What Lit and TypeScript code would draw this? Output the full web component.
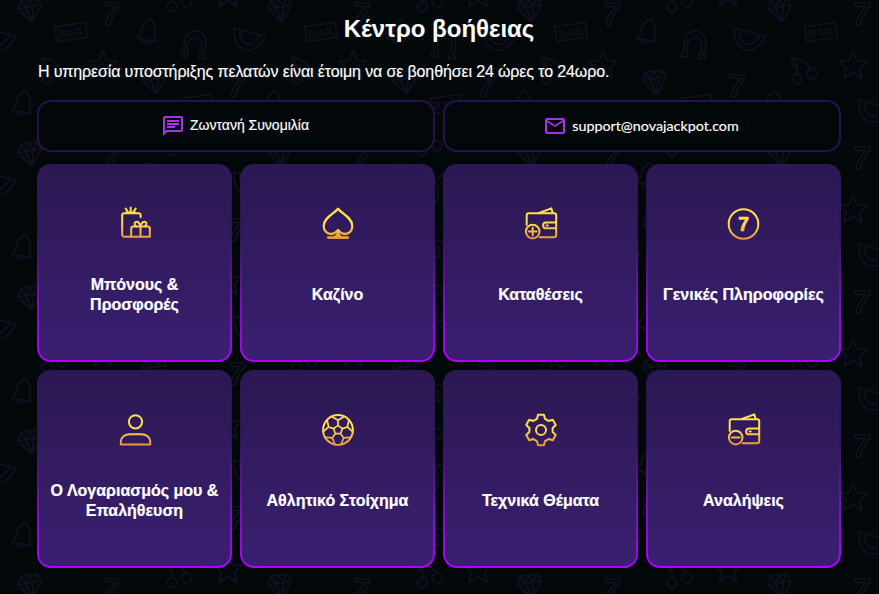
import { LitElement, html, svg, css } from 'lit';
import { customElement } from 'lit/decorators.js';

const polar = (r: number, deg: number) => {
  const a = (deg * Math.PI) / 180;
  return `${(20 + r * Math.cos(a)).toFixed(2)} ${(20 + r * Math.sin(a)).toFixed(2)}`;
};

const gearPath = () => {
  let d = '';
  for (let i = 0; i < 6; i++) {
    const a = -90 + i * 60;
    d += `${i ? 'L' : 'M'}${polar(11.8, a - 20)}L${polar(15.6, a - 11)}L${polar(15.6, a + 11)}L${polar(11.8, a + 20)}`;
  }
  return d + 'Z';
};

const ballPath = () => {
  let d = '';
  for (let i = 0; i < 5; i++) {
    const a = -90 + i * 72;
    d += `${i ? 'L' : 'M'}${polar(4.6, a)}`;
  }
  d += 'Z';
  for (let i = 0; i < 5; i++) {
    const a = -90 + i * 72;
    d += `M${polar(4.6, a)}L${polar(9.8, a)}L${polar(15, a - 25)}M${polar(9.8, a)}L${polar(15, a + 25)}`;
  }
  return d;
};

const walletBody = svg`
  <path d="M5.700 21V11.200a2 2 0 0 1 2-2h25.500a2 2 0 0 1 2 2v20a2 2 0 0 1-2 2H18.600" />
  <path d="M18 9l12.300-4.600 1.400 4.600" />
  <path d="M35 18.500H25a2.800 2.800 0 0 0 0 5.800h10" />
  <path d="M25.600 21.400h1.200" />
  <circle cx="11.700" cy="27.600" r="6.800" />
`;

const icons: Record<string, unknown> = {
  gift: svg`
    <path d="M25.600 13.200v-2a2 2 0 0 0-2-2H9.200a2 2 0 0 0-2 2v19.600a2 2 0 0 0 1.800 1.900h25.800" />
    <path d="M16.200 32.600v-8.200a2 2 0 0 1 2-1.900h14.600a2 2 0 0 1 2 1.900v8.200M25.500 22.500v10" />
    <path d="M25.500 22.500c-1-3.400-3-5-4.600-4.600-2 .5-1.600 3.500.4 4.600M25.500 22.500c1-3.400 3-5 4.600-4.600 2 .5 1.600 3.500-.4 4.600" />
    <path d="M15.700 8V3.400M12.500 7.600l-1.800-3M18.900 7.600l1.800-3" />
    <path d="M11.500 8.500h8.400" />
  `,
  spade: svg`
    <path d="M20 4.800C16.500 9.500 5.700 13.500 5.700 22c0 4.800 3.400 8 7 8 2.900 0 5.400-1.500 7.300-4 1.900 2.500 4.400 4 7.300 4 3.600 0 7-3.200 7-8C34.300 13.500 23.500 9.500 20 4.800Z" stroke-width="2.300" />
    <path d="M20 27c0 2.600-.9 4.400-2.800 5.600h5.600c-1.900-1.200-2.800-3-2.800-5.600Z" />
    <path d="M10.300 33.600h19.400" stroke-width="2.800" />
  `,
  walletPlus: svg`${walletBody}<path d="M7.800 27.600h7.800M11.700 23.700v7.800" />`,
  seven: svg`
    <circle cx="19.500" cy="20" r="14.800" />
    <text class="seven" x="19.500" y="27" text-anchor="middle" fill="url(#grad-seven)">7</text>
  `,
  user: svg`
    <circle cx="20.500" cy="11.800" r="6.600" />
    <path d="M5.800 34.400v-2.800c0-4.400 4-7.400 9.200-7.400h11c5.200 0 9.200 3 9.200 7.400v2.800Z" />
  `,
  ball: svg`
    <circle cx="20" cy="20" r="14.900" />
    <path d=${ballPath()} stroke-width="1.700" />
  `,
  gear: svg`
    <path d=${gearPath()} />
    <circle cx="20" cy="20" r="5" />
  `,
  walletMinus: svg`${walletBody}<path d="M7.800 27.600h7.800" />`,
};

const cards = [
  { title: 'Μπόνους & Προσφορές', icon: 'gift' },
  { title: 'Καζίνο', icon: 'spade' },
  { title: 'Καταθέσεις', icon: 'walletPlus' },
  { title: 'Γενικές Πληροφορίες', icon: 'seven' },
  { title: 'Ο Λογαριασμός μου & Επαλήθευση', icon: 'user' },
  { title: 'Αθλητικό Στοίχημα', icon: 'ball' },
  { title: 'Τεχνικά Θέματα', icon: 'gear' },
  { title: 'Αναλήψεις', icon: 'walletMinus' },
];

// one set of slot symbols, repeated half-drop over the tile
const tileSymbols = svg`
  <g id="set">
    <g transform="translate(30 10) rotate(-8)">
      <path d="M-8-11H8L12-3 0 12-12-3ZM-12-3H12M-4-3 0 12 4-3M-8-11-4-3 0-11 4-3 8-11" />
    </g>
    <text class="p7" transform="translate(110 25) rotate(6)" text-anchor="middle">7</text>
    <g transform="translate(177 -2)">
      <circle cx="-5" cy="9" r="5" /><circle cx="10" cy="4" r="5" />
      <path d="M-4.500 4C-4-3-6-8-10-12-3-13 5-7 9-1M-10-12C-12-9-10-5-6-4" />
    </g>
    <path transform="translate(228 -7)" d="M0-14 4-4.500 14-4 6.500 3 9 13 0 7.500-9 13-6.500 3-14-4-4-4.500Z" />
    <g transform="translate(71 32) rotate(-8)">
      <rect x="-15.500" y="-7.500" width="31" height="15" />
      <text class="bar" y="4" text-anchor="middle">BAR</text>
    </g>
    <g transform="translate(148 32) rotate(10)">
      <path d="M0-13C-2-13-3-11-3-10-7-8-7-2-7 2-7 5-9 6-10 8H10C9 6 7 5 7 2 7-2 7-8 3-10 3-11 2-13 0-13ZM-5 8C-5 12 5 12 5 8" />
    </g>
    <g transform="translate(195 44) rotate(8)">
      <path d="M-6 14H-12V10H-9C-12 3-12-13 0-13 12-13 12 3 9 10H12V14H6V8C9 2 7-6 0-6-7-6-9 2-6 8Z" />
    </g>
    <g transform="translate(248 39) rotate(15)">
      <path d="M-16-7H16C14 6 7 11 0 11-7 11-14 6-16-7ZM-10-7C-9 1-5 5 0 5 5 5 9 1 10-7" />
    </g>
  </g>
`;

@customElement('app-root')
export class AppRoot extends LitElement {
  static styles = css`
    :host {
      display: block;
      position: relative;
      height: 594px;
      overflow: hidden;
      background: #02080a;
      font-family: 'Liberation Sans', Arial, sans-serif;
      color: #fff;
    }

    .backdrop {
      position: absolute;
      inset: 0;
      width: 100%;
      height: 100%;
    }

    .backdrop g, .backdrop path, .backdrop circle, .backdrop rect {
      fill: none;
      stroke: #130f22;
      stroke-width: 1.5;
      stroke-linejoin: round;
    }

    .backdrop text {
      font-family: 'Liberation Sans', sans-serif;
      font-weight: 700;
      fill: none;
      stroke: #130f22;
    }

    .backdrop .p7 {
      font-size: 32px;
      stroke-width: 1.5;
    }

    .backdrop .bar {
      font-size: 10px;
      stroke-width: 0.6;
      letter-spacing: 1px;
    }

    .page {
      position: relative;
      padding: 14px 38px 0 37px;
      display: flex;
      flex-direction: column;
    }

    h1 {
      margin: 0;
      font-size: 24px;
      line-height: 30px;
      font-weight: 700;
      text-align: center;
    }

    .intro {
      margin: 17px 0 0 1px;
      font-size: 16px;
      line-height: 22px;
      letter-spacing: -0.13px;
      -webkit-text-stroke: 0.15px #fff;
    }

    .contacts {
      display: grid;
      grid-template-columns: 1fr 1fr;
      gap: 8px;
      margin-top: 17px;
    }

    .contact {
      display: flex;
      align-items: center;
      justify-content: center;
      gap: 5px;
      height: 52px;
      box-sizing: border-box;
      padding-right: 2px;
      border: 2px solid #2b1149;
      border-radius: 14px;
      background: #02080a;
      font-size: 14px;
      -webkit-text-stroke: 0.15px #fff;
    }

    .contact span {
      margin-top: -2px;
    }

    .contact svg {
      width: 24px;
      height: 24px;
      fill: #a533ec;
    }

    .mail {
      font-family: Lato, sans-serif;
      font-size: 14.3px;
    }

    .grid {
      display: grid;
      grid-template-columns: repeat(4, 1fr);
      grid-auto-rows: 198px;
      gap: 8px;
      margin-top: 12px;
    }

    .card {
      display: flex;
      flex-direction: column;
      align-items: center;
      box-sizing: border-box;
      padding: 38px 8px 0;
      border: 2px solid transparent;
      border-radius: 14px;
      background:
        linear-gradient(180deg, #2c1853 0%, #3a1f70 100%) padding-box,
        linear-gradient(180deg, #2c1853 35%, #7a10c0 70%, #b000ff 100%) border-box;
    }

    .card svg {
      flex: none;
      width: 40px;
      height: 40px;
      fill: none;
      stroke-width: 2;
      stroke-linejoin: round;
      stroke-linecap: round;
    }

    .card .seven {
      font-family: 'Liberation Sans', sans-serif;
      font-weight: 700;
      font-size: 20px;
      stroke-width: 0.5;
    }

    .label {
      display: flex;
      align-items: center;
      justify-content: center;
      height: 40px;
      margin-top: 31px;
      font-size: 16px;
      line-height: 20px;
      font-weight: 700;
      text-align: center;
      -webkit-text-stroke: 0.2px #fff;
    }
  `;

  renderIcon(name: string) {
    const id = `grad-${name}`;
    return html`<svg viewBox="0 0 40 40" stroke="url(#${id})">
      <defs>
        <linearGradient id=${id} gradientUnits="userSpaceOnUse" x1="0" y1="4" x2="0" y2="36">
          <stop offset="0.45" stop-color="#ffdf4e" />
          <stop offset="1" stop-color="#e7933d" />
        </linearGradient>
      </defs>
      ${icons[name]}
    </svg>`;
  }

  render() {
    return html`
      <svg class="backdrop" aria-hidden="true">
        <defs>
          <pattern id="slots" width="250" height="144" patternUnits="userSpaceOnUse">
            ${tileSymbols}
            <use href="#set" x="250" />
            <use href="#set" x="-250" />
            <use href="#set" y="144" />
            <use href="#set" x="250" y="144" />
            <use href="#set" x="125" y="72" />
            <use href="#set" x="-125" y="72" />
            <use href="#set" x="125" y="-72" />
            <use href="#set" x="-125" y="-72" />
          </pattern>
        </defs>
        <rect width="100%" height="100%" style="fill:url(#slots);stroke:none" />
      </svg>
      <div class="page">
        <h1>Κέντρο βοήθειας</h1>
        <p class="intro">Η υπηρεσία υποστήριξης πελατών είναι έτοιμη να σε βοηθήσει 24 ώρες το 24ωρο.</p>
        <div class="contacts">
          <div class="contact">
            <svg viewBox="0 0 24 24"><path d="M20 2H4c-1.100 0-2 .9-2 2v18l4-4h14c1.100 0 2-.9 2-2V4c0-1.100-.9-2-2-2zm0 14H5.170L4 17.170V4h16v12zM6 12h8v2H6zM6 9h12v2H6zM6 6h12v2H6z" /></svg>
            <span>Ζωντανή Συνομιλία</span>
          </div>
          <div class="contact">
            <svg viewBox="0 0 24 24"><path d="M20 4H4c-1.100 0-1.990.9-1.990 2L2 18c0 1.100.9 2 2 2h16c1.100 0 2-.9 2-2V6c0-1.100-.9-2-2-2zm0 14H4V8l8 5 8-5v10zm-8-7L4 6h16l-8 5z" /></svg>
            <span class="mail">support@novajackpot.com</span>
          </div>
        </div>
        <div class="grid">
          ${cards.map(c => html`
            <div class="card">
              ${this.renderIcon(c.icon)}
              <div class="label">${c.title}</div>
            </div>
          `)}
        </div>
      </div>
    `;
  }
}
